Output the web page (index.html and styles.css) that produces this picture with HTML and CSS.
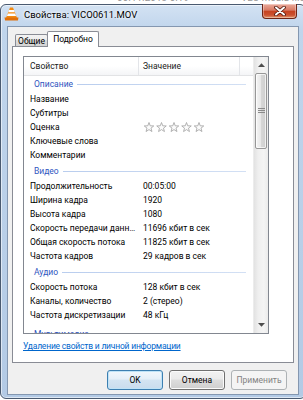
FILE: index.html
```html
<!DOCTYPE html>
<html lang="ru">
<head>
    <meta charset="UTF-8">
    <meta name="viewport" content="width=device-width, initial-scale=1.0">
    <title>Свойства: VICO0611.MOV</title>
    <link rel="stylesheet" href="styles.css">
</head>
<body>
    <div class="behind">
        <span class="behind-date">06.11.2013 0:19</span>
        <span class="behind-type">VLC media file (.mov)</span>
    </div>
    <div class="window">
        <div class="titlebar">
            <svg class="app-icon" width="15" height="14" viewBox="0 0 15 14">
                <path d="M6 0.5h3l4 10.5h-11z" fill="#f28a12"/>
                <path d="M5.1 3h4.8l0.9 2.3h-6.6z" fill="#fff"/>
                <path d="M3.9 6.5h7.2l1 2.5h-9.2z" fill="#fff"/>
                <path d="M0.5 10.5h14l-0.6 3h-12.8z" fill="#e0700a"/>
            </svg>
            <span class="title">Свойства: VICO0611.MOV</span>
            <div class="close">
                <svg width="12" height="10" viewBox="0 0 12 10">
                    <path d="M2 1.5l8 7M10 1.5l-8 7" stroke="#4a140a" stroke-width="3.6" stroke-linecap="round"/>
                    <path d="M2 1.5l8 7M10 1.5l-8 7" stroke="#fff" stroke-width="2" stroke-linecap="round"/>
                </svg>
            </div>
        </div>
        <div class="client">
            <div class="tabs">
                <div class="tab">Общие</div>
                <div class="tab active">Подробно</div>
            </div>
            <div class="panel">
                <div class="list">
                    <div class="list-main">
                        <div class="header">
                            <div class="col-name">Свойство</div>
                            <div class="col-value">Значение</div>
                            <div class="col-rest"></div>
                        </div>
                        <div class="rows">
                            <div class="group">Описание</div>
                            <div class="item"><div class="name">Название</div><div class="value"></div></div>
                            <div class="item"><div class="name">Субтитры</div><div class="value"></div></div>
                            <div class="item">
                                <div class="name">Оценка</div>
                                <div class="value">
                                    <svg class="stars" width="64" height="12" viewBox="0 0 64 12">
                                        <defs>
                                            <path id="star" d="M5.5 0.5L6.73 3.8L10.26 3.95L7.5 6.15L8.44 9.55L5.5 7.6L2.56 9.55L3.5 6.15L0.74 3.95L4.27 3.8Z" fill="#fbfbfb" stroke="#a9a9a9" stroke-width="0.9" stroke-linejoin="round"/>
                                        </defs>
                                        <use href="#star" x="0.5" y="1"/>
                                        <use href="#star" x="13" y="1"/>
                                        <use href="#star" x="25.5" y="1"/>
                                        <use href="#star" x="38" y="1"/>
                                        <use href="#star" x="50.5" y="1"/>
                                    </svg>
                                </div>
                            </div>
                            <div class="item"><div class="name">Ключевые слова</div><div class="value"></div></div>
                            <div class="item"><div class="name">Комментарии</div><div class="value"></div></div>

                            <div class="group">Видео</div>
                            <div class="item"><div class="name">Продолжительность</div><div class="value">00:05:00</div></div>
                            <div class="item"><div class="name">Ширина кадра</div><div class="value">1920</div></div>
                            <div class="item"><div class="name">Высота кадра</div><div class="value">1080</div></div>
                            <div class="item"><div class="name">Скорость передачи данных</div><div class="value">11696 кбит в сек</div></div>
                            <div class="item"><div class="name">Общая скорость потока</div><div class="value">11825 кбит в сек</div></div>
                            <div class="item"><div class="name">Частота кадров</div><div class="value">29 кадров в сек</div></div>

                            <div class="group">Аудио</div>
                            <div class="item"><div class="name">Скорость потока</div><div class="value">128 кбит в сек</div></div>
                            <div class="item"><div class="name">Каналы, количество</div><div class="value">2 (стерео)</div></div>
                            <div class="item"><div class="name">Частота дискретизации</div><div class="value">48 кГц</div></div>

                            <div class="group last">Мультимедиа</div>
                        </div>
                    </div>
                    <div class="scrollbar">
                        <div class="arrow">
                            <svg width="7" height="4" viewBox="0 0 7 4"><path d="M0 4L3.5 0.3L7 4z" fill="#4d4d4d"/></svg>
                        </div>
                        <div class="thumb">
                            <svg width="7" height="6" viewBox="0 0 7 6">
                                <path d="M0 0.5h7M0 2.5h7M0 4.5h7" stroke="#8a8a8a" stroke-width="1"/>
                            </svg>
                        </div>
                        <div class="track"></div>
                        <div class="arrow">
                            <svg width="7" height="4" viewBox="0 0 7 4"><path d="M0 0L3.5 3.7L7 0z" fill="#4d4d4d"/></svg>
                        </div>
                    </div>
                </div>
                <a class="link" href="#">Удаление свойств и личной информации</a>
            </div>
            <div class="buttons">
                <button class="btn default">OK</button>
                <button class="btn">Отмена</button>
                <button class="btn" disabled>Применить</button>
            </div>
        </div>
    </div>
</body>
</html>
```

FILE: styles.css
```css
body {
    margin: 0;
    width: 303px;
    height: 400px;
    overflow: hidden;
    background: #fff;
    font-family: Roboto, "Liberation Sans", sans-serif;
    font-size: 8.5px;
    color: #000;
}
.behind {
    height: 4px;
    overflow: hidden;
    display: flex;
    color: #9a9a9a;
    font-size: 10px;
    line-height: 10px;
    white-space: nowrap;
}
.behind span {
    margin-top: -7px;
}
.behind-date {
    margin-left: 117px;
}
.behind-type {
    margin-left: 52px;
}
.window {
    width: 306px;
    height: 395px;
    box-sizing: border-box;
    border: 1px solid #4a5a70;
    border-radius: 6px;
    background: linear-gradient(#d3e2f3, #c0d5ec 24px, #b9cfe8 60%, #b3cae5);
    box-shadow: inset 0 0 0 1px rgba(255,255,255,0.55);
    padding: 0 6px 3px;
    display: flex;
    flex-direction: column;
}
.titlebar {
    height: 21px;
    display: flex;
    align-items: flex-start;
}
.app-icon {
    margin: 2px 0 0 -3px;
}
.title {
    margin-left: 5px;
    line-height: 19px;
    font-size: 9.5px;
    color: #000;
    text-shadow: 0 0 5px #fff, 0 0 3px #fff;
}
.close {
    margin: -1px 2px 0 auto;
    width: 35px;
    height: 15px;
    box-sizing: border-box;
    border: 1px solid #6e2516;
    border-top: none;
    border-radius: 0 0 4px 4px;
    background: linear-gradient(#eaab9c, #d87a64 45%, #c6411f 50%, #cc5231 80%, #e39b6f);
    box-shadow: inset 0 0 0 1px rgba(255,255,255,0.35);
    display: flex;
    justify-content: center;
    align-items: center;
}
.client {
    height: 369px;
    box-sizing: border-box;
    border: 1px solid #8497b0;
    background: #f0f0f0;
    padding: 4px;
    display: flex;
    flex-direction: column;
}
.tabs {
    height: 15px;
    padding-left: 3px;
    display: flex;
    align-items: flex-end;
}
.tab {
    width: 33px;
    height: 12px;
    box-sizing: border-box;
    border: 1px solid #898c95;
    border-bottom: none;
    border-radius: 2px 2px 0 0;
    background: linear-gradient(#f3f3f3, #ebebeb 45%, #dddddd 50%, #d3d3d3);
    text-align: center;
    line-height: 13px;
}
.tab.active {
    width: 52px;
    height: 16px;
    margin: 0 0 -1px -1px;
    background: #fff;
    line-height: 15px;
    z-index: 1;
}
.panel {
    height: 317px;
    box-sizing: border-box;
    border: 1px solid #898c95;
    background: #fff;
    padding: 9px 0 0 10px;
}
.list {
    width: 246px;
    height: 278px;
    box-sizing: border-box;
    border: 1px solid #828790;
    display: flex;
}
.list-main {
    flex: 1;
    display: flex;
    flex-direction: column;
    min-width: 0;
}
.header {
    height: 19px;
    box-sizing: border-box;
    border-bottom: 1px solid #e2e3e5;
    background: linear-gradient(#fff, #fff 50%, #f4f5f7);
    display: flex;
    line-height: 18px;
    color: #1a1a1a;
}
.header .col-name {
    width: 115px;
    box-sizing: border-box;
    padding-left: 6px;
    border-right: 1px solid #e3e5e9;
}
.header .col-value {
    width: 101px;
    box-sizing: border-box;
    padding-left: 4px;
    border-right: 1px solid #e3e5e9;
}
.header .col-rest {
    flex: 1;
}
.rows {
    flex: 1;
    overflow: hidden;
}
.group {
    height: 16px;
    margin-top: 1px;
    padding-left: 10px;
    display: flex;
    align-items: center;
    color: #2f55c0;
}
.group:first-child {
    margin-top: 0;
}
.group.last {
    margin-top: 4px;
}
.group::after {
    content: "";
    flex: 1;
    height: 1px;
    margin: 0 7px 0 4px;
    background: linear-gradient(90deg, #b9cdee, #d3e0f4);
}
.item {
    height: 14px;
    line-height: 14px;
    display: flex;
}
.item .name {
    width: 115px;
    box-sizing: border-box;
    padding: 0 1px 0 6px;
    white-space: nowrap;
    overflow: hidden;
    text-overflow: ellipsis;
}
.item .value {
    padding-left: 4px;
    display: flex;
    align-items: center;
    white-space: nowrap;
}
.scrollbar {
    width: 15px;
    display: flex;
    flex-direction: column;
    background: linear-gradient(90deg, #e2e2e2, #efefef 30%, #f4f4f4 70%, #ebebeb);
    border-left: 1px solid #ececec;
    box-sizing: border-box;
}
.arrow {
    height: 16px;
    display: flex;
    justify-content: center;
    align-items: center;
}
.thumb {
    height: 76px;
    margin: 0 1px;
    box-sizing: border-box;
    border: 1px solid #979797;
    border-radius: 2px;
    background: linear-gradient(90deg, #f5f5f5, #e8e8e8 45%, #d6d6d6 55%, #cfcfcf);
    box-shadow: inset 0 0 0 1px rgba(255,255,255,0.7);
    display: flex;
    justify-content: center;
    align-items: center;
}
.track {
    flex: 1;
}
.link {
    display: block;
    margin-top: 6px;
    line-height: 12px;
    letter-spacing: -0.2px;
    color: #0066cc;
    text-decoration: underline;
    white-space: nowrap;
}
.buttons {
    margin-top: 7px;
    padding-right: 7px;
    display: flex;
    justify-content: flex-end;
    gap: 6px;
}
.btn {
    width: 56px;
    height: 20px;
    padding: 0;
    border: 1px solid #707070;
    border-radius: 3px;
    background: linear-gradient(#f2f2f2, #ebebeb 45%, #dddddd 50%, #cfcfcf);
    box-shadow: inset 0 0 0 1px #fbfbfb;
    font-family: Roboto, "Liberation Sans", sans-serif;
    font-size: 8.5px;
    color: #000;
}
.btn.default {
    border-color: #3c7fb1;
    background: linear-gradient(#f1f7fc, #e4eff8 45%, #d3e4f2 50%, #c9dced);
    box-shadow: inset 0 0 0 1px #bfe3f7;
}
.btn:disabled {
    border-color: #adb2b5;
    background: #f4f4f4;
    box-shadow: none;
    color: #838383;
}
```
